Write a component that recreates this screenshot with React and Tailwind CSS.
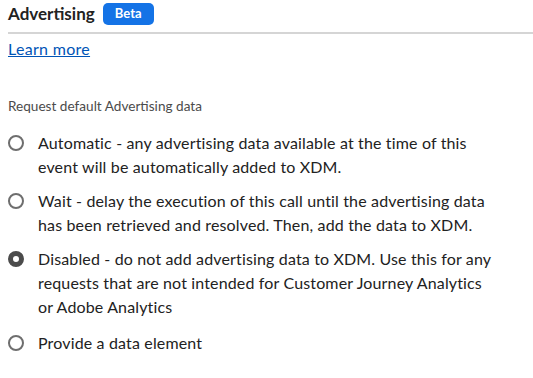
import React from "react";

const Radio = ({ checked }) => (
  <span
    className={
      "mt-[4px] box-border inline-block h-[16px] w-[16px] shrink-0 rounded-full bg-white " +
      (checked ? "border-[5px] border-[#4b4b4b]" : "border-2 border-[#6e6e6e]")
    }
  />
);

const options = [
  { checked: false, lines: ["Automatic - any advertising data available at the time of this", "event will be automatically added to XDM."] },
  { checked: false, lines: ["Wait - delay the execution of this call until the advertising data", "has been retrieved and resolved. Then, add the data to XDM."] },
  { checked: true, lines: ["Disabled - do not add advertising data to XDM. Use this for any", "requests that are not intended for Customer Journey Analytics", "or Adobe Analytics"] },
  { checked: false, lines: ["Provide a data element"] },
];

export default function App() {
  return (
    <div className="h-[378px] w-[533px] overflow-hidden bg-white font-['Lato',sans-serif] text-[#222222]">
      <div className="flex items-center gap-[8px] pl-2 pt-[3px]">
        <h2 className="text-[17px] font-bold leading-[22px]">Advertising</h2>
        <span className="flex h-[22px] w-[51px] items-center justify-center rounded-[5px] bg-[#1473e6] text-[13px] font-bold text-white">
          Beta
        </span>
      </div>
      <div className="ml-2 mt-[7px] h-[2px] bg-[#d5d5d5]" />
      <a href="#" className="ml-2 mt-[5px] inline-block text-[16px] leading-[20px] tracking-[0.3px] text-[#0054b6] underline">
        Learn more
      </a>
      <div className="pl-2 pt-[37px] text-[13.6px] leading-[16px] text-[#4b4b4b]">Request default Advertising data</div>
      <div className="flex flex-col gap-[10px] pl-[8px] pt-[17px]">
        {options.map((o, i) => (
          <label key={i} className={"flex gap-[14px]" + (i === 3 ? " mt-[2px]" : "")}>
            <Radio checked={o.checked} />
            <span className="text-[16px] leading-[24px] tracking-[0.15px]">
              {o.lines.map((l, j) => (
                <React.Fragment key={j}>
                  {l}
                  {j < o.lines.length - 1 && <br />}
                </React.Fragment>
              ))}
            </span>
          </label>
        ))}
      </div>
    </div>
  );
}
